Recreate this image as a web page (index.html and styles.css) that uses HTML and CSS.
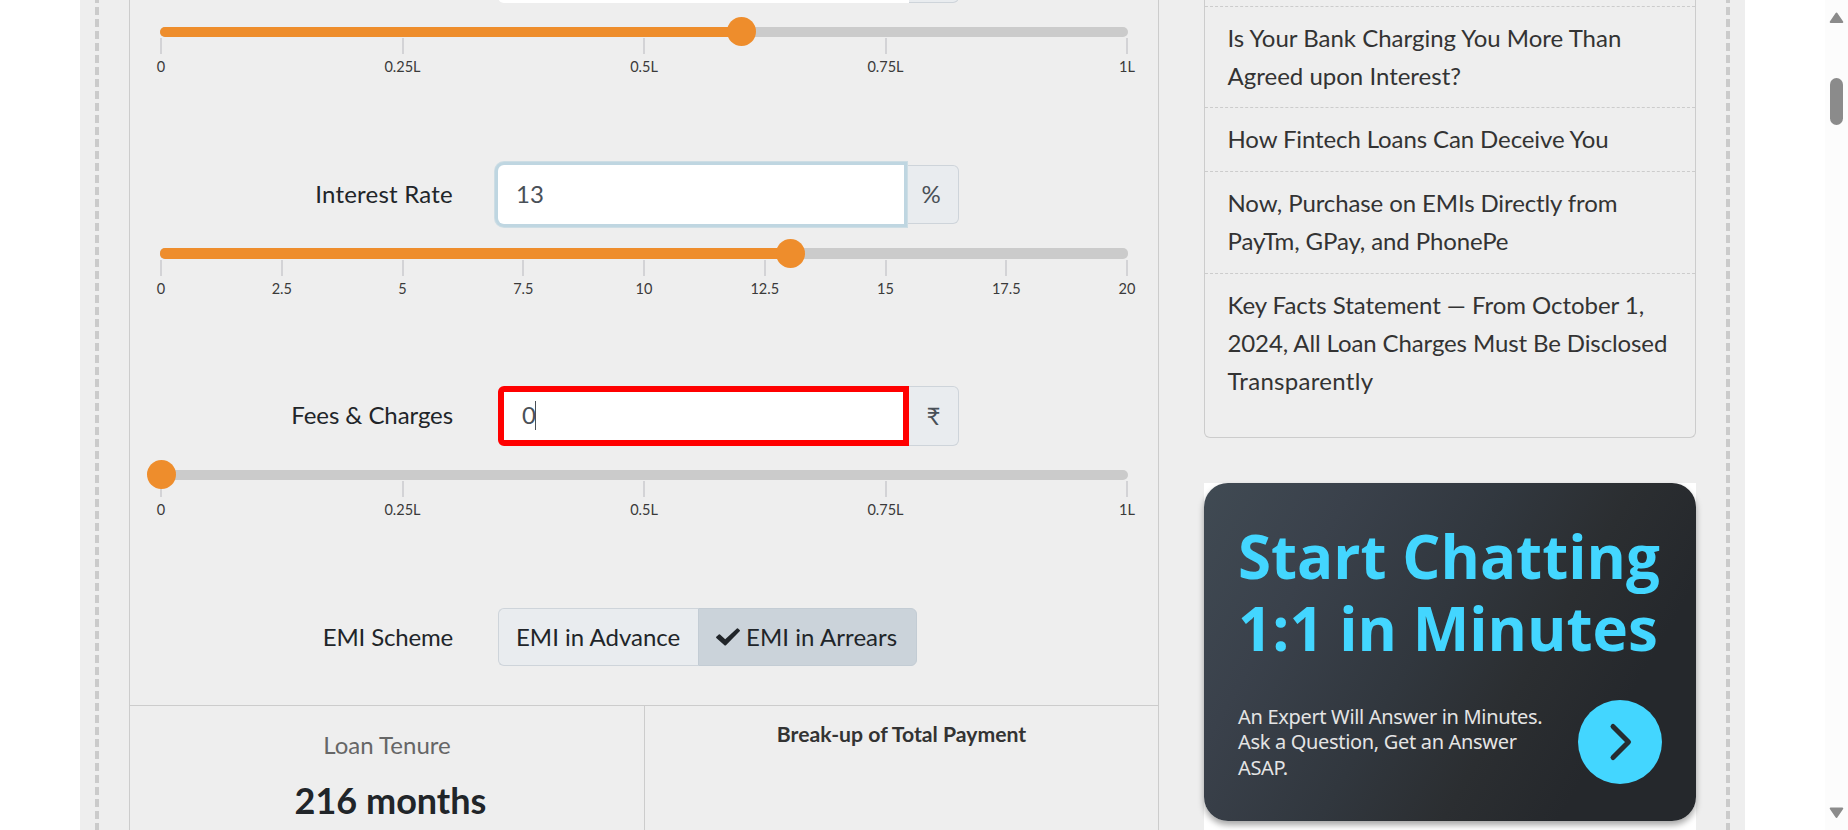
FILE: index.html
```
<!DOCTYPE html>
<html lang="en">
<head>
<meta charset="utf-8">
<title>EMI Calculator</title>
<link rel="stylesheet" href="styles.css">
</head>
<body>
<div class="viewport">
  <div class="page">
    <div class="rail"></div>
    <main class="calculator">
      <section class="field field-amount">
        <div class="field-row">
          <span class="field-label"></span>
          <div class="group"><div class="box"></div><div class="addon"></div></div>
        </div>
        <div class="slider">
          <div class="track"><div class="fill" style="width:60.1%"></div><div class="knob" style="left:60.1%"></div></div>
          <div class="scale"><span>0</span><span>0.25L</span><span>0.5L</span><span>0.75L</span><span>1L</span></div>
        </div>
      </section>
      <section class="field field-rate">
        <div class="field-row">
          <span class="field-label">Interest Rate</span>
          <div class="group"><div class="box focused">13</div><div class="addon">%</div></div>
        </div>
        <div class="slider">
          <div class="track"><div class="fill" style="width:65.1%"></div><div class="knob" style="left:65.1%"></div></div>
          <div class="scale"><span>0</span><span>2.5</span><span>5</span><span>7.5</span><span>10</span><span>12.5</span><span>15</span><span>17.5</span><span>20</span></div>
        </div>
      </section>
      <section class="field field-fees">
        <div class="field-row">
          <span class="field-label">Fees &amp; Charges</span>
          <div class="group"><div class="box marked">0<i class="caret"></i></div><div class="addon">₹</div></div>
        </div>
        <div class="slider">
          <div class="track"><div class="knob" style="left:0.16%"></div></div>
          <div class="scale"><span>0</span><span>0.25L</span><span>0.5L</span><span>0.75L</span><span>1L</span></div>
        </div>
      </section>
      <section class="field field-scheme">
        <div class="field-row">
          <span class="field-label">EMI Scheme</span>
          <div class="toggle">
            <div class="option">EMI in Advance</div>
            <div class="option selected"><svg class="check" viewBox="0 0 24 18"><path d="M0.3 8.8 L2.8 6.4 Q3.4 6 4 6.5 L9.2 11.2 L20.9 0.4 Q21.5 0 22 0.4 L23.7 2.1 Q24.2 2.7 23.7 3.2 L10.2 17 Q9.2 18 8.2 17 L0.3 9.9 Q-0.2 9.3 0.3 8.8Z" fill="#212529"/></svg>EMI in Arrears</div>
          </div>
        </div>
      </section>
      <section class="results">
        <div class="result">
          <div class="result-name">Loan Tenure</div>
          <div class="result-value">216 months</div>
        </div>
        <div class="breakup">Break-up of Total Payment</div>
      </section>
    </main>
    <aside class="sidebar">
      <ul class="articles">
        <li class="stub"></li>
        <li>Is Your Bank Charging You More Than<br>Agreed upon Interest?</li>
        <li class="snug">How Fintech Loans Can Deceive You</li>
        <li class="snug">Now, Purchase on EMIs Directly from<br>PayTm, GPay, and PhonePe</li>
        <li><span class="near">Key Facts Statement — From October 1,</span><br><span class="snug">2024, All Loan Charges Must Be Disclosed</span><br><span class="loose">Transparently</span></li>
      </ul>
      <div class="ad">
        <div class="ad-card">
          <div class="ad-title">Start Chatting<br>1:1 in Minutes</div>
          <div class="ad-foot">
            <div class="ad-text">An Expert Will Answer in Minutes.<br>Ask a Question, Get an Answer<br>ASAP.</div>
            <div class="ad-button"><svg viewBox="0 0 84 84"><path d="M35 26.5 L50.5 42 L35 57.5" fill="none" stroke="#262c30" stroke-width="5" stroke-linecap="round" stroke-linejoin="round"/></svg></div>
          </div>
        </div>
      </div>
    </aside>
    <div class="rail"></div>
  </div>
  <div class="scrollbar">
    <svg class="arrow" viewBox="0 0 15 12"><path d="M7.5 1.5 L13.3 10 L1.7 10Z" fill="#8b8b8b" stroke="#8b8b8b" stroke-width="2" stroke-linejoin="round"/></svg>
    <div class="thumb"></div>
    <svg class="arrow down" viewBox="0 0 15 12"><path d="M7.5 10 L13.3 1.5 L1.7 1.5Z" fill="#8b8b8b" stroke="#8b8b8b" stroke-width="2" stroke-linejoin="round"/></svg>
  </div>
</div>
</body>
</html>
```
FILE: styles.css
```
* { box-sizing: border-box; }
body {
  margin: 0;
  background: #fff;
  color: #212529;
  font: 24px/36px Lato, "Noto Sans", sans-serif;
  overflow: hidden;
}
.viewport {
  display: flex;
  justify-content: space-between;
  height: 830px;
  padding-left: 80px;
  overflow: hidden;
}
.page {
  display: flex;
  width: 1665px;
  height: 830px;
  padding: 0 15px;
  background: #eee;
}
.rail {
  flex: none;
  width: 4px;
  background: repeating-linear-gradient(#cbcbcb 0 3px, #eee 3px 7px, #cbcbcb 7px 12px);
}
.calculator {
  flex: none;
  width: 1030px;
  height: 900px;
  margin: -57px 0 0 30px;
  border: solid #ccc;
  border-width: 0 1px;
}
.field { height: 221px; padding: 0 30px; }
.field-amount { height: 222px; }
.field-scheme { height: 97px; }
.field-fees { height: 222px; }
.field-row { display: flex; }
.field-label {
  width: 293px;
  margin-right: 45px;
  padding-top: 11px;
  text-align: right;
}
.field-rate .field-label { letter-spacing: .22px; }
.field-fees .field-label { letter-spacing: -.08px; }
.field-scheme .field-label { letter-spacing: -.17px; }
.group { display: flex; width: 461px; height: 60px; }
.field-rate .group { height: 59px; }
.box {
  position: relative;
  width: 411px;
  padding: 12px 19px;
  background: #fff;
  border-radius: 6px 0 0 6px;
  color: #495057;
}
.focused {
  width: 406px;
  margin-right: 5px;
  padding: 11px 18px;
  box-shadow: 0 0 0 3px #bfd6e1, 0 0 0 4px #cddde4;
  z-index: 1;
}
.marked { padding: 5px 18px; border: 6px solid #f00; }
.caret {
  position: absolute;
  left: 31px;
  top: 9px;
  width: 1px;
  height: 29px;
  background: #495057;
}
.addon {
  width: 50px;
  padding: 11px 0;
  border: 1px solid #ced4da;
  border-left: 0;
  border-radius: 0 6px 6px 0;
  background: #e9ecef;
  color: #495057;
  text-align: center;
}
.focused + .addon {
  width: 55px;
  margin-left: -5px;
  padding: 10px 0 0;
}
.slider { padding-top: 24px; }
.track {
  position: relative;
  width: 968px;
  height: 10px;
  border-radius: 5px;
  background: #cbcbcb;
}
.field-rate .track { height: 11px; }
.fill { height: 100%; border-radius: 5px; background: #ee8d2c; }
.knob {
  position: absolute;
  top: -10px;
  width: 29px;
  height: 29px;
  margin-left: -14.5px;
  border-radius: 50%;
  background: #ee8d2c;
}
.field-rate .knob { top: -9px; }
.scale {
  display: flex;
  justify-content: space-between;
  width: 966px;
  margin: 1px 1px 0;
  font-size: 14.5px;
  line-height: 20px;
  color: #3a3a3a;
}
.scale span {
  display: flex;
  flex-direction: column;
  align-items: center;
  width: 0;
  white-space: nowrap;
}
.scale span::before {
  content: "";
  width: 2px;
  height: 16px;
  margin-bottom: 3px;
  background: #d3d3d6;
}
.toggle { display: flex; height: 58px; }
.option {
  display: flex;
  align-items: center;
  width: 200px;
  padding: 0 0 1px 17px;
  border: 1px solid #ced4da;
  border-right: 0;
  border-radius: 6px 0 0 6px;
  background: #e9ecef;
  white-space: nowrap;
}
.selected {
  width: 219px;
  border: 1px solid #c3ccd4;
  border-radius: 0 6px 6px 0;
  background: #cbd3da;
  padding-left: 17px;
  letter-spacing: .07px;
}
.check { width: 24px; height: 18px; margin-right: 6px; }
.results { display: flex; height: 200px; border-top: 1px solid #ccc; }
.result {
  width: 515px;
  padding: 21px 0 0;
  border-right: 1px solid #ccc;
  text-align: center;
}
.result-name { color: #666; }
.result-value {
  margin-top: 10px;
  padding-left: 7px;
  font-size: 36px;
  line-height: 54px;
  font-weight: 700;
}
.breakup { flex: 1; padding-top: 10px; text-align: center; font-size: 21.2px; font-weight: 700; color: #333; }
.sidebar { width: 492px; margin: 0 30px 0 45px; }
.articles {
  margin: 0;
  padding: 0;
  height: 438px;
  list-style: none;
  border: 1px solid #ccc;
  border-top: 0;
  border-radius: 0 0 6px 6px;
  color: #333;
  line-height: 38px;
}
.articles li {
  padding: 12px 0 13px 22.5px;
  border-bottom: 1px dashed #ccc;
  white-space: nowrap;
}
.articles li:nth-child(2) { padding-bottom: 12px; }
.articles .stub { height: 7px; padding: 0; }
.articles li:last-child { border: 0; }
.snug { letter-spacing: -.11px; }
.near { letter-spacing: -.04px; }
.loose { letter-spacing: .3px; }
.ad { height: 347px; margin-top: 45px; background: #fff; }
.ad-card {
  height: 338px;
  padding: 37px 34px 0;
  border-radius: 24px;
  background: linear-gradient(120deg, #404a53 0%, #3a414b 22%, #31373e 45%, #2b2e31 63%, #25282c 80%);
  box-shadow: 0 4px 6px rgba(0, 0, 0, .35);
  font-family: "Open Sans", sans-serif;
}
.ad-title { color: #43d6ff; font-size: 60px; line-height: 72px; font-weight: 700; white-space: nowrap; }
.ad-foot { display: flex; justify-content: space-between; margin-top: 36px; }
.ad-text { padding-top: 4px; color: #e4e4e4; font: 20px/25.3px "Noto Sans", sans-serif; letter-spacing: -.32px; white-space: nowrap; }
.ad-button { width: 84px; height: 84px; border-radius: 50%; background: #43d6ff; }
.ad-button svg { display: block; }
.scrollbar {
  display: flex;
  flex-direction: column;
  align-items: center;
  width: 23px;
  padding: 12px 0 11px;
  background: #fcfcfc;
}
.arrow { width: 15px; height: 12px; }
.thumb { width: 13px; height: 47px; margin-top: 54px; border-radius: 7px; background: #8b8b8b; }
.down { margin-top: auto; }
```
